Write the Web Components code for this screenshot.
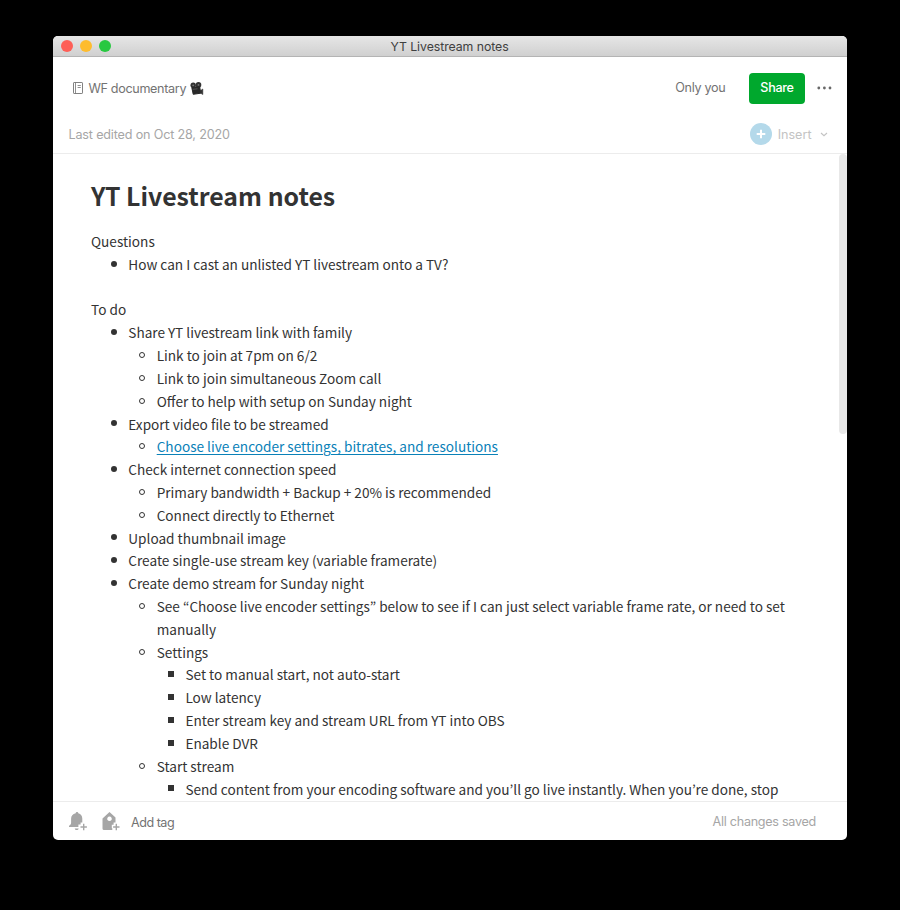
<!DOCTYPE html>
<html lang="en"><head><meta charset="utf-8"><title>YT Livestream notes</title>
<style>
body{margin:0;background:#000;height:910px;overflow:hidden;padding:36px 53px;box-sizing:border-box}
</style></head><body>
<note-window></note-window>
<script>
const define=(name,html)=>{
  const t=document.createElement('template');t.innerHTML=html;
  customElements.define(name,class extends HTMLElement{
    constructor(){super();this.attachShadow({mode:'open'}).append(t.content.cloneNode(true));}
  });
};
define('title-bar',`<style>
:host{display:grid;grid-template-columns:1fr auto 1fr;align-items:center;height:21px;box-sizing:border-box;background:linear-gradient(#e6e6e6,#d0d0d0);border-bottom:1px solid #b4b4b4;font:12.3px/20px Inter,sans-serif;color:#404040;letter-spacing:-.06px}
.l{display:flex;gap:7px;padding-left:7.5px}i{width:12px;height:12px;border-radius:50%}
span{padding-top:2px;line-height:18px;margin-left:-1px}
</style><div class="l"><i style="background:#fe5f57"></i><i style="background:#febc2e"></i><i style="background:#28c840"></i></div><span><slot></slot></span>`);
define('note-header',`<style>
:host{display:block;height:97px;box-sizing:border-box;border-bottom:1px solid #ececec;font:12.6px/20px Inter,sans-serif;color:#737373}
.r{display:flex;align-items:center}.a{height:62px;padding:0 15.5px 0 20px}.b{height:30px;padding:0 19.5px 0 15.5px;color:#a6a6a6}
.g{flex:1}svg{display:block;flex:none}
.s{background:#00a82d;color:#fff;border-radius:4px;width:56px;height:31px;line-height:30px;text-align:center;font-weight:500;margin:0 12px 0 23px;letter-spacing:-.3px;text-indent:1px}
</style>
<div class="r a"><svg width="11" height="12" viewBox="0 0 11 12" fill="none" stroke="#737373"><rect x=".5" y=".5" width="9" height="11" rx=".6" stroke-width=".9"/><path d="M2.500.5v11M4.600 3.500h3.200M4.600 5.500h3.200" stroke-width=".8"/></svg>
<span style="margin:0 4px 0 4.5px;letter-spacing:-.34px;padding-top:1px">WF documentary</span>
<svg width="14" height="13" viewBox="0 0 14 13"><circle cx="3.2" cy="3.3" r="2.7" fill="#333"/><circle cx="8.5" cy="2.9" r="2.8" fill="#333"/><path d="M1.800 5.500 9.600 4.600 10.800 11.200 3.200 12.300z" fill="#282828" stroke="#282828" stroke-linejoin="round"/><path d="M10 9 12.800 7v5.500L10.400 11z" fill="#333" stroke="#333" stroke-width=".6"/><circle cx="3.2" cy="3.3" r=".9" fill="#777"/><circle cx="8.5" cy="2.9" r=".9" fill="#777"/><path d="M3 7.300l4.500-.5" stroke="#666" stroke-width=".7"/></svg>
<span class="g"></span><span style="letter-spacing:-.3px">Only you</span><span class="s">Share</span>
<svg width="15" height="4" viewBox="0 0 15 4" fill="#686868"><circle cx="1.8" cy="2" r="1.4"/><circle cx="7.4" cy="2" r="1.4"/><circle cx="13" cy="2" r="1.4"/></svg></div>
<div class="r b"><span style="letter-spacing:-.17px;padding-top:1px">Last edited on Oct 28, 2020</span><span class="g"></span>
<svg width="22" height="22" viewBox="0 0 22 22"><circle cx="11" cy="11" r="11" fill="#b4d9ea"/><path d="M11 6.7v8.6M6.7 11h8.6" stroke="#fff" stroke-width="2"/></svg>
<span style="margin:0 8px 0 6px;color:#c3c3c3;padding-top:1px">Insert</span><svg width="8" height="5" viewBox="0 0 8 5" fill="none" stroke="#c3c3c3" stroke-width="1.1"><path d="M1 1 4 3.7 7 1"/></svg></div>`);
define('note-row',`<style>
:host{display:grid;grid-template-columns:auto 1fr;line-height:22.81px}
.k{display:none;height:21.8px;align-items:center;box-sizing:border-box}.k::before{content:"";box-sizing:border-box}
:host([level="1"]){padding-left:20px}:host([level="2"]){padding-left:48.4px}:host([level="3"]){padding-left:77.1px}
:host([level]) .k{display:flex;width:17.3px}
:host([level="1"]) .k::before{width:6px;height:6px;border-radius:50%;background:#333}
:host([level="2"]) .k::before{width:6px;height:6px;border-radius:50%;border:1px solid #333}
:host([level="3"]) .k::before{width:6px;height:6px;background:#333}
::slotted(a){color:#0a81b8;text-decoration:underline;text-underline-offset:1.5px}
</style><span class="k"></span><span><slot></slot></span>`);
define('note-editor',`<style>
:host{display:flex;height:647px;overflow:hidden;font:13.62px/22.81px "Noto Sans CJK KR",sans-serif;color:#333}
.p{flex:1;padding:21.5px 35px 0 38px}h1{margin:0;font:700 24.85px/38px "Noto Sans CJK KR",sans-serif;height:54.5px}
.t{width:8px;height:280px;background:#e8e8e8;border-radius:4px}
</style><div class="p"><h1><slot name="title"></slot></h1><slot></slot></div><div class="t"></div>`);
define('note-footer',`<style>
:host{display:flex;align-items:center;height:39px;box-sizing:border-box;border-top:1px solid #ececec;padding:2px 31px 0 15.5px;font:12.6px/20px Inter,sans-serif;color:#737373}
svg{display:block}.g{flex:1}
</style><svg width="19" height="20" viewBox="0 0 19 20" fill="#a6a6a6"><path d="M8 0c.9 0 1.3.6 1.3 1.3 2.6.7 4 2.8 4 5.4v3.7h-1.7v2.1h-2.2V15H0v-1.3c1.3-.7 2.1-1.6 2.1-3.3V6.7c0-2.6 1.6-4.7 4.6-5.4C6.700.6 7.1 0 8 0zM5.7 16.500h4c-.3 1-1 1.5-2 1.500s-1.700-.5-2-1.500z"/><path d="M14.700 11.800v6.400M11.500 15h6.400" stroke="#a6a6a6" stroke-width="1.4"/></svg>
<svg style="margin-left:14px" width="19" height="20" viewBox="0 0 19 20"><path fill="#a6a6a6" fill-rule="evenodd" d="M7.500 0 13.500 5.500v5H11.600v2.300H9.800v3.400H10.300V18H2Q.5 18 .5 16.500V6.500zM7.500 4.500a2.300 2.300 0 1 0 .01 0z"/><path d="M14.300 11.800v6.400M11.100 15h6.400" stroke="#a6a6a6" stroke-width="1.4"/></svg>
<span style="margin-left:10.5px;letter-spacing:-.5px;padding-top:1px">Add tag</span><span class="g"></span><span style="color:#a6a6a6;letter-spacing:-.28px">All changes saved</span>`);
define('note-window',`<style>:host{display:block;width:794px;height:804px;background:#fff;border-radius:5px;overflow:hidden}</style>
<title-bar>YT Livestream notes</title-bar><note-header></note-header>
<note-editor><span slot="title">YT Livestream notes</span>
<note-row>Questions</note-row><note-row level="1">How can I cast an unlisted YT livestream onto a TV?</note-row><note-row>&nbsp;</note-row>
<note-row>To do</note-row><note-row level="1">Share YT livestream link with family</note-row>
<note-row level="2">Link to join at 7pm on 6/2</note-row><note-row level="2">Link to join simultaneous Zoom call</note-row><note-row level="2">Offer to help with setup on Sunday night</note-row>
<note-row level="1">Export video file to be streamed</note-row><note-row level="2"><a>Choose live encoder settings, bitrates, and resolutions</a></note-row>
<note-row level="1">Check internet connection speed</note-row><note-row level="2">Primary bandwidth + Backup + 20% is recommended</note-row><note-row level="2">Connect directly to Ethernet</note-row>
<note-row level="1">Upload thumbnail image</note-row><note-row level="1">Create single-use stream key (variable framerate)</note-row><note-row level="1">Create demo stream for Sunday night</note-row>
<note-row level="2">See “Choose live encoder settings” below to see if I can just select variable frame rate, or need to set manually</note-row>
<note-row level="2">Settings</note-row><note-row level="3">Set to manual start, not auto-start</note-row><note-row level="3">Low latency</note-row><note-row level="3">Enter stream key and stream URL from YT into OBS</note-row><note-row level="3">Enable DVR</note-row>
<note-row level="2">Start stream</note-row><note-row level="3">Send content from your encoding software and you’ll go live instantly. When you’re done, stop</note-row>
</note-editor><note-footer></note-footer>`);
</script></body></html>
